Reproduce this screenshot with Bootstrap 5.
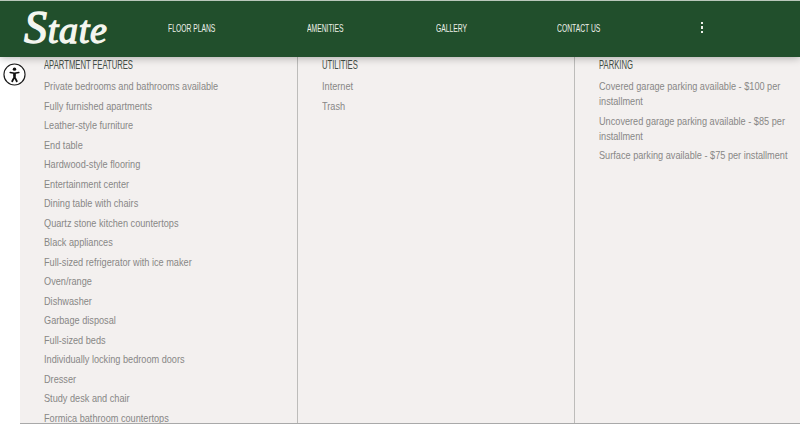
<!DOCTYPE html>
<html lang="en"><head><meta charset="utf-8">
<link href="https://cdn.jsdelivr.net/npm/bootstrap@5.3.0/dist/css/bootstrap.min.css" rel="stylesheet">
<style>
html,body{height:429px;overflow:hidden;background:#fff}
.site-top{height:57px;background:#214f2c;border-top:1px solid #b9c7bb;box-shadow:0 1px 8px rgba(0,0,0,.3);position:relative;z-index:2;padding-bottom:2px}
.logo-word{font-family:"Liberation Serif",serif;font-style:italic;font-weight:400;font-size:38px;line-height:1;color:#f4f6f0;width:168px;padding-left:24px;flex:none;-webkit-text-stroke:1.3px #f4f6f0;letter-spacing:.7px;margin-top:2px}
.logo-cap{font-size:46px;line-height:38px}
.nav-word{font-family:"Liberation Sans",sans-serif;font-size:11px;color:#eef1ea;white-space:nowrap;text-decoration:none;display:block;transform:scaleX(.615);transform-origin:left center;flex:none}
.nav-a{width:139px}.nav-b{width:129px}.nav-c{width:121px}.nav-d{width:144px}
.dots{display:flex;flex-direction:column;gap:2px;margin-bottom:1px}
.dots i{display:block;width:2px;height:2.5px;background:#eef1ea}
.info-wrap{height:367px;margin-left:20px;background:#f3f0ef;border-bottom:1px solid #a9a9a9;overflow:hidden}
.info-col{flex:none;height:100%;padding-left:24px;overflow:hidden}
.info-col.c1{width:277px}.info-col.c2,.info-col.c3{border-left:1px solid #bdbcba}
.info-col.c2{width:277px}.info-col.c3{flex:1;padding-right:6px}
.info-head{font-family:"Liberation Sans",sans-serif;font-size:12.5px;line-height:14px;color:#454f46;margin:1px 0 7px;font-weight:400;white-space:nowrap;transform:scaleX(.614);transform-origin:left center}
.info-item{font-family:"Liberation Sans",sans-serif;font-size:10.3px;line-height:15px;color:#888786;margin-bottom:4.5px;width:113.2%;transform:scaleX(.89);transform-origin:left center}
.a11y{position:absolute;left:3px;top:62.5px;width:23px;height:23px;z-index:3}
</style></head><body>
<header class="site-top d-flex align-items-center">
<div class="logo-word"><span class="logo-cap">S</span>tate</div>
<a class="nav-word nav-a" href="#">FLOOR PLANS</a>
<a class="nav-word nav-b" href="#">AMENITIES</a>
<a class="nav-word nav-c" href="#">GALLERY</a>
<a class="nav-word nav-d" href="#">CONTACT US</a>
<span class="dots"><i></i><i></i><i></i></span>
</header>
<svg class="a11y" viewBox="0 0 24 24" fill="none"><circle cx="12" cy="12" r="11" fill="#fff" stroke="#1b1b1b" stroke-width="1.2"/><circle cx="12" cy="6.4" r="1.8" fill="#111"/><path d="M7.5 10 12 10.6 16.5 10" stroke="#111" stroke-width="1.6" stroke-linecap="round" stroke-linejoin="round"/><path d="M12 10.6V14.4" stroke="#111" stroke-width="2.8"/><path d="M12 14.4 9.6 19M12 14.4 14.4 19" stroke="#111" stroke-width="1.9" stroke-linecap="round"/></svg>
<main class="info-wrap d-flex">
<section class="info-col c1">
<h2 class="info-head">APARTMENT FEATURES</h2>
<p class="info-item">Private bedrooms and bathrooms available</p>
<p class="info-item">Fully furnished apartments</p>
<p class="info-item">Leather-style furniture</p>
<p class="info-item">End table</p>
<p class="info-item">Hardwood-style flooring</p>
<p class="info-item">Entertainment center</p>
<p class="info-item">Dining table with chairs</p>
<p class="info-item">Quartz stone kitchen countertops</p>
<p class="info-item">Black appliances</p>
<p class="info-item">Full-sized refrigerator with ice maker</p>
<p class="info-item">Oven/range</p>
<p class="info-item">Dishwasher</p>
<p class="info-item">Garbage disposal</p>
<p class="info-item">Full-sized beds</p>
<p class="info-item">Individually locking bedroom doors</p>
<p class="info-item">Dresser</p>
<p class="info-item">Study desk and chair</p>
<p class="info-item">Formica bathroom countertops</p>
</section>
<section class="info-col c2">
<h2 class="info-head">UTILITIES</h2>
<p class="info-item">Internet</p>
<p class="info-item">Trash</p>
</section>
<section class="info-col c3">
<h2 class="info-head">PARKING</h2>
<p class="info-item">Covered garage parking available - $100 per installment</p>
<p class="info-item">Uncovered garage parking available - $85 per installment</p>
<p class="info-item">Surface parking available - $75 per installment</p>
</section>
</main>
</body></html>
